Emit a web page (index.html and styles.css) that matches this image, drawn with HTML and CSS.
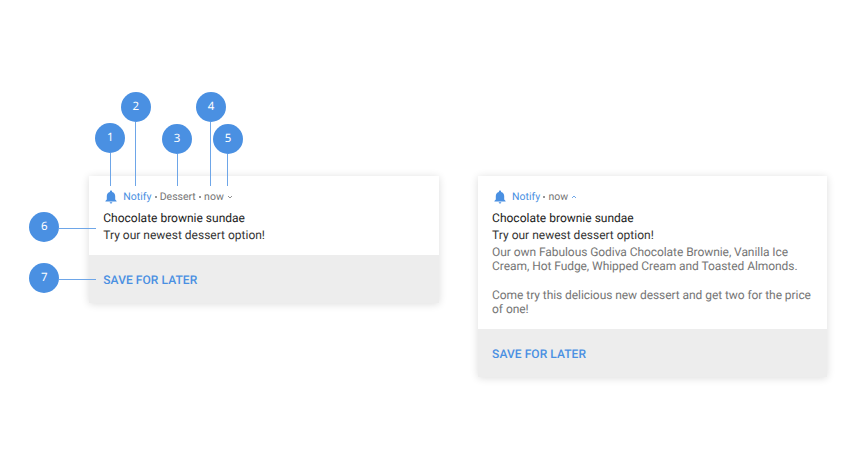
FILE: index.html
```
<!DOCTYPE html>
<html lang="en">
	<head>
		<meta charset="UTF-8">
		<meta name="viewport" content="width=device-width, initial-scale=1.0">
		<title>Notification anatomy</title>
		<link rel="stylesheet" href="styles.css">
	</head>
	<body>
		<div class="cards">
			<div class="card">
				<div class="content">
					<div class="header">
						<svg class="bell" viewBox="0 0 12 14"><path d="M6 .5c-.7 0-1.1.5-1.1 1.1v.5C2.9 2.6 1.8 4.2 1.8 6.2v3.3L.4 10.9v.6h11.2v-.6L10.2 9.5V6.2c0-2-1.1-3.6-3.1-4.1v-.5C7.1 1 6.700.5 6 .5zM4.7 12.2a1.3 1.3 0 0 0 2.6 0z"/></svg>
						<span class="app">Notify</span>
						<span class="dot"></span>
						<span class="channel">Dessert</span>
						<span class="dot"></span>
						<span class="time">now</span>
						<svg class="arrow" viewBox="0 0 6 4"><path d="M1 1l2 2 2-2"/></svg>
					</div>
					<div class="title">Chocolate brownie sundae</div>
					<div class="text">Try our newest dessert option!</div>
				</div>
				<div class="actions">SAVE FOR LATER</div>

				<!-- numbered callouts over the card -->
				<div class="callout c1"><span>1</span></div>
				<div class="callout c2"><span>2</span></div>
				<div class="callout c3"><span>3</span></div>
				<div class="callout c4"><span>4</span></div>
				<div class="callout c5"><span>5</span></div>
				<div class="callout side c6"><span>6</span></div>
				<div class="callout side c7"><span>7</span></div>
			</div>

			<div class="card">
				<div class="content">
					<div class="header">
						<svg class="bell" viewBox="0 0 12 14"><path d="M6 .5c-.7 0-1.1.5-1.1 1.1v.5C2.9 2.6 1.8 4.2 1.8 6.2v3.3L.4 10.9v.6h11.2v-.6L10.2 9.5V6.2c0-2-1.1-3.6-3.1-4.1v-.5C7.1 1 6.700.5 6 .5zM4.7 12.2a1.3 1.3 0 0 0 2.6 0z"/></svg>
						<span class="app">Notify</span>
						<span class="dot"></span>
						<span class="time">now</span>
						<svg class="arrow up" viewBox="0 0 6 4"><path d="M1 3l2-2 2 2"/></svg>
					</div>
					<div class="title">Chocolate brownie sundae</div>
					<div class="text">Try our newest dessert option!</div>
					<p class="details">Our own Fabulous Godiva Chocolate Brownie, Vanilla Ice<br>Cream, Hot Fudge, Whipped Cream and Toasted Almonds.</p>
					<p class="details more">Come try this delicious new dessert and get two for the price<br>of one!</p>
				</div>
				<div class="actions">SAVE FOR LATER</div>
			</div>
		</div>
	</body>
</html>
```
FILE: styles.css
```
body{
	margin:0;
	background:#fff;
	font-family:Roboto,"Liberation Sans",sans-serif;
	text-rendering:geometricPrecision;
}

.cards{
	display:flex;
	align-items:flex-start;
	gap:39.5px;
	padding:175.5px 0 20px 89.3px;
}

.card{
	position:relative;
	width:349.3px;
	flex-shrink:0;
	background:#fff;
	box-shadow:0 1px 8px rgba(0,0,0,0.14);
}

.content{
	padding:13.5px 14px 11px;
}

.header{
	display:flex;
	align-items:center;
	height:15px;
	padding-left:2px;
	margin-bottom:5px;
	font-size:10.5px;
	color:#757575;
}

.bell{
	width:12px;
	height:14px;
	margin-right:6px;
	fill:#4a90e2;
}

.app{
	color:#4a90e2;
}

.dot{
	width:2px;
	height:2px;
	margin:1px 3px 0 3.3px;
	border-radius:50%;
	background:#757575;
}

.arrow{
	width:6px;
	height:4px;
	margin:1px 0 0 3px;
	fill:none;
	stroke:#757575;
	stroke-width:.8;
}

.arrow.up{
	stroke:#4a90e2;
}

.title,
.text{
	height:17px;
	font-size:12px;
	line-height:19px;
	white-space:nowrap;
	color:#212121;
}

.text{
	height:18px;
	color:#333;
}

.details{
	margin:1px 0 0;
	font-size:12px;
	line-height:14px;
	letter-spacing:-.065px;
	white-space:nowrap;
	color:#757575;
}

.details.more{
	margin:15px 0 1.5px;
}

.actions{
	height:48px;
	padding-left:14px;
	background:#ededed;
	font-size:12px;
	font-weight:500;
	line-height:50px;
	letter-spacing:.06px;
	color:#4a90e2;
}

/* callouts */
.callout{
	position:absolute;
	display:flex;
	flex-direction:column;
	align-items:center;
	width:30px;
}

.callout span{
	width:30px;
	height:30px;
	flex-shrink:0;
	border-radius:50%;
	background:#4a90e2;
	font-family:"Noto Sans","Open Sans",sans-serif;
	font-size:11.5px;
	line-height:29px;
	text-align:center;
	color:#fff;
}

/* leader line */
.callout::after{
	content:"";
	flex:1;
	width:1px;
	background:#6ea6e8;
}

.callout.side{
	flex-direction:row;
	width:67px;
	height:30px;
}

.callout.side::after{
	width:auto;
	height:1px;
	margin-top:2px;
}

.c1{left:6px;top:-52.5px;height:63px;}
.c2{left:31.5px;top:-83.5px;height:94px;}
.c3{left:72.8px;top:-51.5px;height:62px;}
.c4{left:106.7px;top:-83.5px;height:94px;}
.c5{left:123.7px;top:-51.5px;height:62px;}
.c6{left:-60px;top:36.5px;}
.c7{left:-60px;top:87.5px;}
```
